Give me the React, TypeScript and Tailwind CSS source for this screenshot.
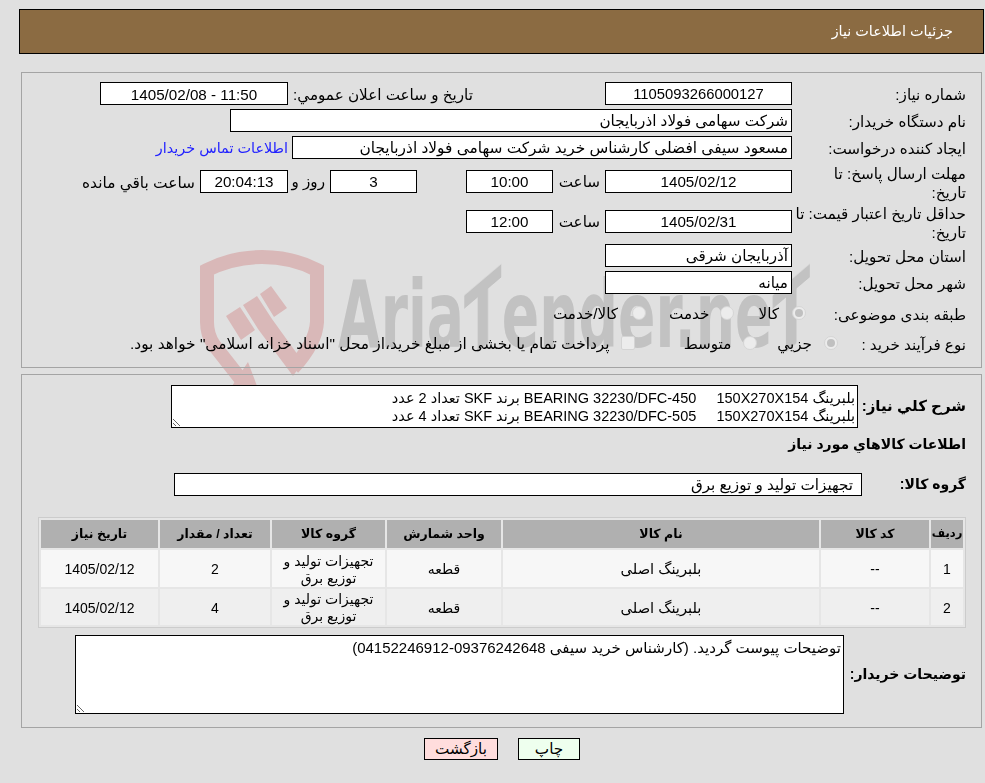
import React from "react";

const Box = ({ children, className = "", ar = false }: { children?: React.ReactNode; className?: string; ar?: boolean }) => (
  <div className={`h-[23px] shrink-0 border border-black bg-white ${ar ? "leading-[22px]" : "leading-[23px]"} whitespace-nowrap overflow-hidden ${className}`}>{children}</div>
);

const Label = ({ children, className = "w-[174px]" }: { children: React.ReactNode; className?: string }) => (
  <div className={`shrink-0 whitespace-nowrap pt-[2px] leading-[19px] ${className}`}>{children}</div>
);

const Radio = ({ on = false }: { on?: boolean }) => (
  <span className="relative flex h-[14px] w-[14px] shrink-0 items-center justify-center rounded-full border border-[#d4d4d4] bg-[#ececec]">
    {on && <span className="h-[8px] w-[8px] rounded-full bg-[#c0c0c0]" />}
  </span>
);

const Th = ({ children, w, small = false }: { children: React.ReactNode; w: string; small?: boolean }) => (
  <th className={`bg-[#b0b0b0] p-0 text-center font-bold ${small ? "text-[11.5px]" : "text-[12.5px]"} ${w}`}>{children}</th>
);

const Td = ({ children, bg, name = false }: { children: React.ReactNode; bg: string; name?: boolean }) => (
  <td className={`p-0 pt-[2px] text-center align-middle leading-[17px] ${name ? "text-[14.7px]" : "text-[14px]"} ${bg}`}>{children}</td>
);

const Watermark = () => (
  <div className="pointer-events-none absolute left-0 top-0 h-0 w-0">
    <svg className="absolute left-[190px] top-[240px]" width="150" height="150" viewBox="190 240 150 150">
      <path
        fill="none"
        stroke="#d9b8b8"
        strokeWidth="14"
        d="M243 382 L214 345 C209 338 207 330 207 322 L207 270 C225 261 245 257 262 257 C280 257 300 261 317 270 L317 322 C316 340 305 355 293 368"
      />
      <path fill="#d9b8b8" d="M248 362 L257 386 L232 386 Z M226 316 L240 307 L255 330 L241 340 Z M243 305 L257 296 L272 319 L258 329 Z M260 294 L271 286 L287 308 L274 317 Z M258 329 L272 319 L303 362 L293 376 Z" />
    </svg>
    <div className="absolute left-[338px] top-[261px] origin-top-left scale-x-[0.6] whitespace-nowrap text-[92px] font-bold leading-[110px] text-[#c2c2c2] [font-family:'DejaVu_Sans',sans-serif]" dir="ltr">
      Aria<span className="inline-block origin-center -skew-y-[27deg]">T</span>ender.ne<span className="inline-block origin-center -skew-y-[27deg]">T</span>
    </div>
  </div>
);

export default function App() {
  return (
    <div dir="rtl" className="relative h-[783px] overflow-hidden bg-[#e0e0e0] text-[15.2px] text-black [font-family:'Liberation_Sans','DejaVu_Sans',sans-serif]">
      <Watermark />
      <div className="relative flex flex-col pr-px pl-[19px] pt-[9px]">
        <div className="flex h-[45px] items-center border border-black bg-[#8b6b42] pr-[30px] text-[14.4px] text-white">جزئیات اطلاعات نیاز</div>

        <div className="mt-[18px] ml-[2px] mr-[2px] flex h-[296px] flex-col border border-[#a4a4a4] pr-[15px] pt-[9px]">
          <div className="flex h-[23px] items-center">
            <Label>شماره نیاز:</Label>
            <Box className="w-[187px] text-center text-[14.8px]">1105093266000127</Box>
            <div className="mr-[132px] w-[180px] shrink-0 whitespace-nowrap pt-[3px] text-left">تاریخ و ساعت اعلان عمومي:</div>
            <Box className="mr-[5px] w-[188px] text-center">11:50 - 1405/02/08</Box>
          </div>
          <div className="mt-[4px] flex h-[23px] items-center">
            <Label>نام دستگاه خریدار:</Label>
            <Box ar className="w-[562px] pr-[3px]">شرکت سهامی فولاد اذربایجان</Box>
          </div>
          <div className="mt-[4px] flex h-[23px] items-center">
            <Label>ایجاد کننده درخواست:</Label>
            <Box ar className="w-[500px] pr-[3px] text-[15.4px]">مسعود سیفی افضلی کارشناس خرید شرکت سهامی فولاد اذربایجان</Box>
            <a className="mr-[4px] whitespace-nowrap pt-[2px] text-[14.4px] text-[#2222ff]">اطلاعات تماس خریدار</a>
          </div>
          <div className="mt-[11px] flex h-[23px] items-center">
            <Label>مهلت ارسال پاسخ: تا<br />تاریخ:</Label>
            <Box ar className="w-[187px] text-center">1405/02/12</Box>
            <div className="mr-[5px] w-[47px] shrink-0 pt-[2px]">ساعت</div>
            <Box ar className="w-[87px] text-center">10:00</Box>
            <div className="w-[49px] shrink-0" />
            <Box ar className="w-[87px] text-center">3</Box>
            <div className="mr-[5px] w-[37px] shrink-0 pt-[2px]">روز و</div>
            <Box ar className="w-[88px] bg-[#ffffee] text-center">20:04:13</Box>
            <div className="mr-[5px] whitespace-nowrap pt-[2px] text-[15.4px]">ساعت باقي مانده</div>
          </div>
          <div className="mt-[17px] flex h-[23px] items-center">
            <Label>حداقل تاریخ اعتبار قیمت: تا<br />تاریخ:</Label>
            <Box ar className="w-[187px] text-center">1405/02/31</Box>
            <div className="mr-[5px] w-[47px] shrink-0 pt-[2px]">ساعت</div>
            <Box ar className="w-[87px] text-center">12:00</Box>
          </div>
          <div className="mt-[11px] flex h-[23px] items-center">
            <Label>استان محل تحویل:</Label>
            <Box ar className="w-[187px] pr-[3px]">آذربایجان شرقی</Box>
          </div>
          <div className="mt-[4px] flex h-[23px] items-center">
            <Label>شهر محل تحویل:</Label>
            <Box ar className="w-[187px] pr-[3px]">میانه</Box>
          </div>
          <div className="mt-[9px] flex h-[20px] items-center">
            <Label className="w-[160px]">طبقه بندی موضوعی:</Label>
            <Radio on />
            <span className="mr-[13px] mt-[3px]">کالا</span>
            <span className="mr-[24px]"><Radio /></span>
            <span className="mr-[11px] mt-[3px]">خدمت</span>
            <span className="mr-[23px]"><Radio /></span>
            <span className="mr-[14px] mt-[3px]">کالا/خدمت</span>
          </div>
          <div className="mt-[10px] flex h-[20px] items-center">
            <Label className="w-[128px]">نوع فرآیند خرید :</Label>
            <Radio on />
            <span className="mr-[12px] mt-[2px]">جزيي</span>
            <span className="mr-[20px]"><Radio /></span>
            <span className="mr-[12px] mt-[2px]">متوسط</span>
            <span className="mr-[49px] block h-[14px] w-[14px] shrink-0 rounded-[2px] border border-[#d4d4d4] bg-[#ececec]" />
            <span className="mr-[11px] mt-[2px] whitespace-nowrap text-[15.4px]">پرداخت تمام یا بخشی از مبلغ خرید،از محل "اسناد خزانه اسلامی" خواهد بود.</span>
          </div>
        </div>

        <div className="mt-[6px] ml-[2px] mr-[2px] flex h-[354px] flex-col border border-[#a4a4a4] pl-[15px] pr-[15px] pt-[10px]">
          <div className="flex items-center">
            <div className="w-[108px] shrink-0 whitespace-nowrap text-[15px] font-bold">شرح كلي نياز:</div>
            <textarea
              readOnly
              className="h-[43px] w-[687px] border border-black bg-white pr-[2px] pt-[3px] text-[14.5px] leading-[18px] outline-none"
              value={"بلبرینگ BEARING 32230/DFC-450     150X270X154 برند SKF تعداد 2 عدد\nبلبرینگ BEARING 32230/DFC-505     150X270X154 برند SKF تعداد 4 عدد"}
            />
          </div>
          <div className="mt-[6px] h-[20px] text-[14px] font-bold leading-[20px]">اطلاعات كالاهاي مورد نياز</div>
          <div className="mt-[19px] flex items-center">
            <div className="w-[104px] shrink-0 whitespace-nowrap text-[14px] font-bold">گروه کالا:</div>
            <Box ar className="w-[688px] pr-[8px]">تجهیزات تولید و توزیع برق</Box>
          </div>
          <table className="mt-[21px] w-[928px] table-fixed border-separate border-spacing-[2px] border border-[#cccccc] bg-[#e6e6e6]">
            <thead>
              <tr className="h-[28px]">
                <Th w="w-[32px]" small>ردیف</Th>
                <Th w="w-[108px]">کد کالا</Th>
                <Th w="w-[316px]">نام کالا</Th>
                <Th w="w-[114px]">واحد شمارش</Th>
                <Th w="w-[113px]">گروه کالا</Th>
                <Th w="w-[110px]">تعداد / مقدار</Th>
                <Th w="w-[117px]">تاریخ نیاز</Th>
              </tr>
            </thead>
            <tbody>
              <tr className="h-[37px]">
                <Td bg="bg-[#f7f7f7]">1</Td>
                <Td bg="bg-[#f7f7f7]">--</Td>
                <Td bg="bg-[#f7f7f7]" name>بلبرینگ اصلی</Td>
                <Td bg="bg-[#f7f7f7]">قطعه</Td>
                <Td bg="bg-[#f7f7f7]">تجهیزات تولید و توزیع برق</Td>
                <Td bg="bg-[#f7f7f7]">2</Td>
                <Td bg="bg-[#f7f7f7]">1405/02/12</Td>
              </tr>
              <tr className="h-[36px]">
                <Td bg="bg-[#efefef]">2</Td>
                <Td bg="bg-[#efefef]">--</Td>
                <Td bg="bg-[#efefef]" name>بلبرینگ اصلی</Td>
                <Td bg="bg-[#efefef]">قطعه</Td>
                <Td bg="bg-[#efefef]">تجهیزات تولید و توزیع برق</Td>
                <Td bg="bg-[#efefef]">4</Td>
                <Td bg="bg-[#efefef]">1405/02/12</Td>
              </tr>
            </tbody>
          </table>
          <div className="mt-[7px] flex items-center">
            <div className="w-[122px] shrink-0 whitespace-nowrap text-[14px] font-bold">توضیحات خریدار:</div>
            <textarea
              readOnly
              className="h-[79px] w-[769px] border border-black bg-white pr-[2px] pt-[3px] text-[15px] leading-[18px] outline-none"
              value="توضیحات پیوست گردید. (کارشناس خرید سیفی 09376242648-04152246912)"
            />
          </div>
        </div>

        <div className="mt-[10px] flex justify-center pl-px">
          <button className="h-[22px] w-[62px] border border-black bg-[#eeffee] leading-[20px]">چاپ</button>
          <button className="mr-[20px] h-[22px] w-[74px] border border-black bg-[#ffdddd] leading-[20px]">بازگشت</button>
        </div>
      </div>
    </div>
  );
}
